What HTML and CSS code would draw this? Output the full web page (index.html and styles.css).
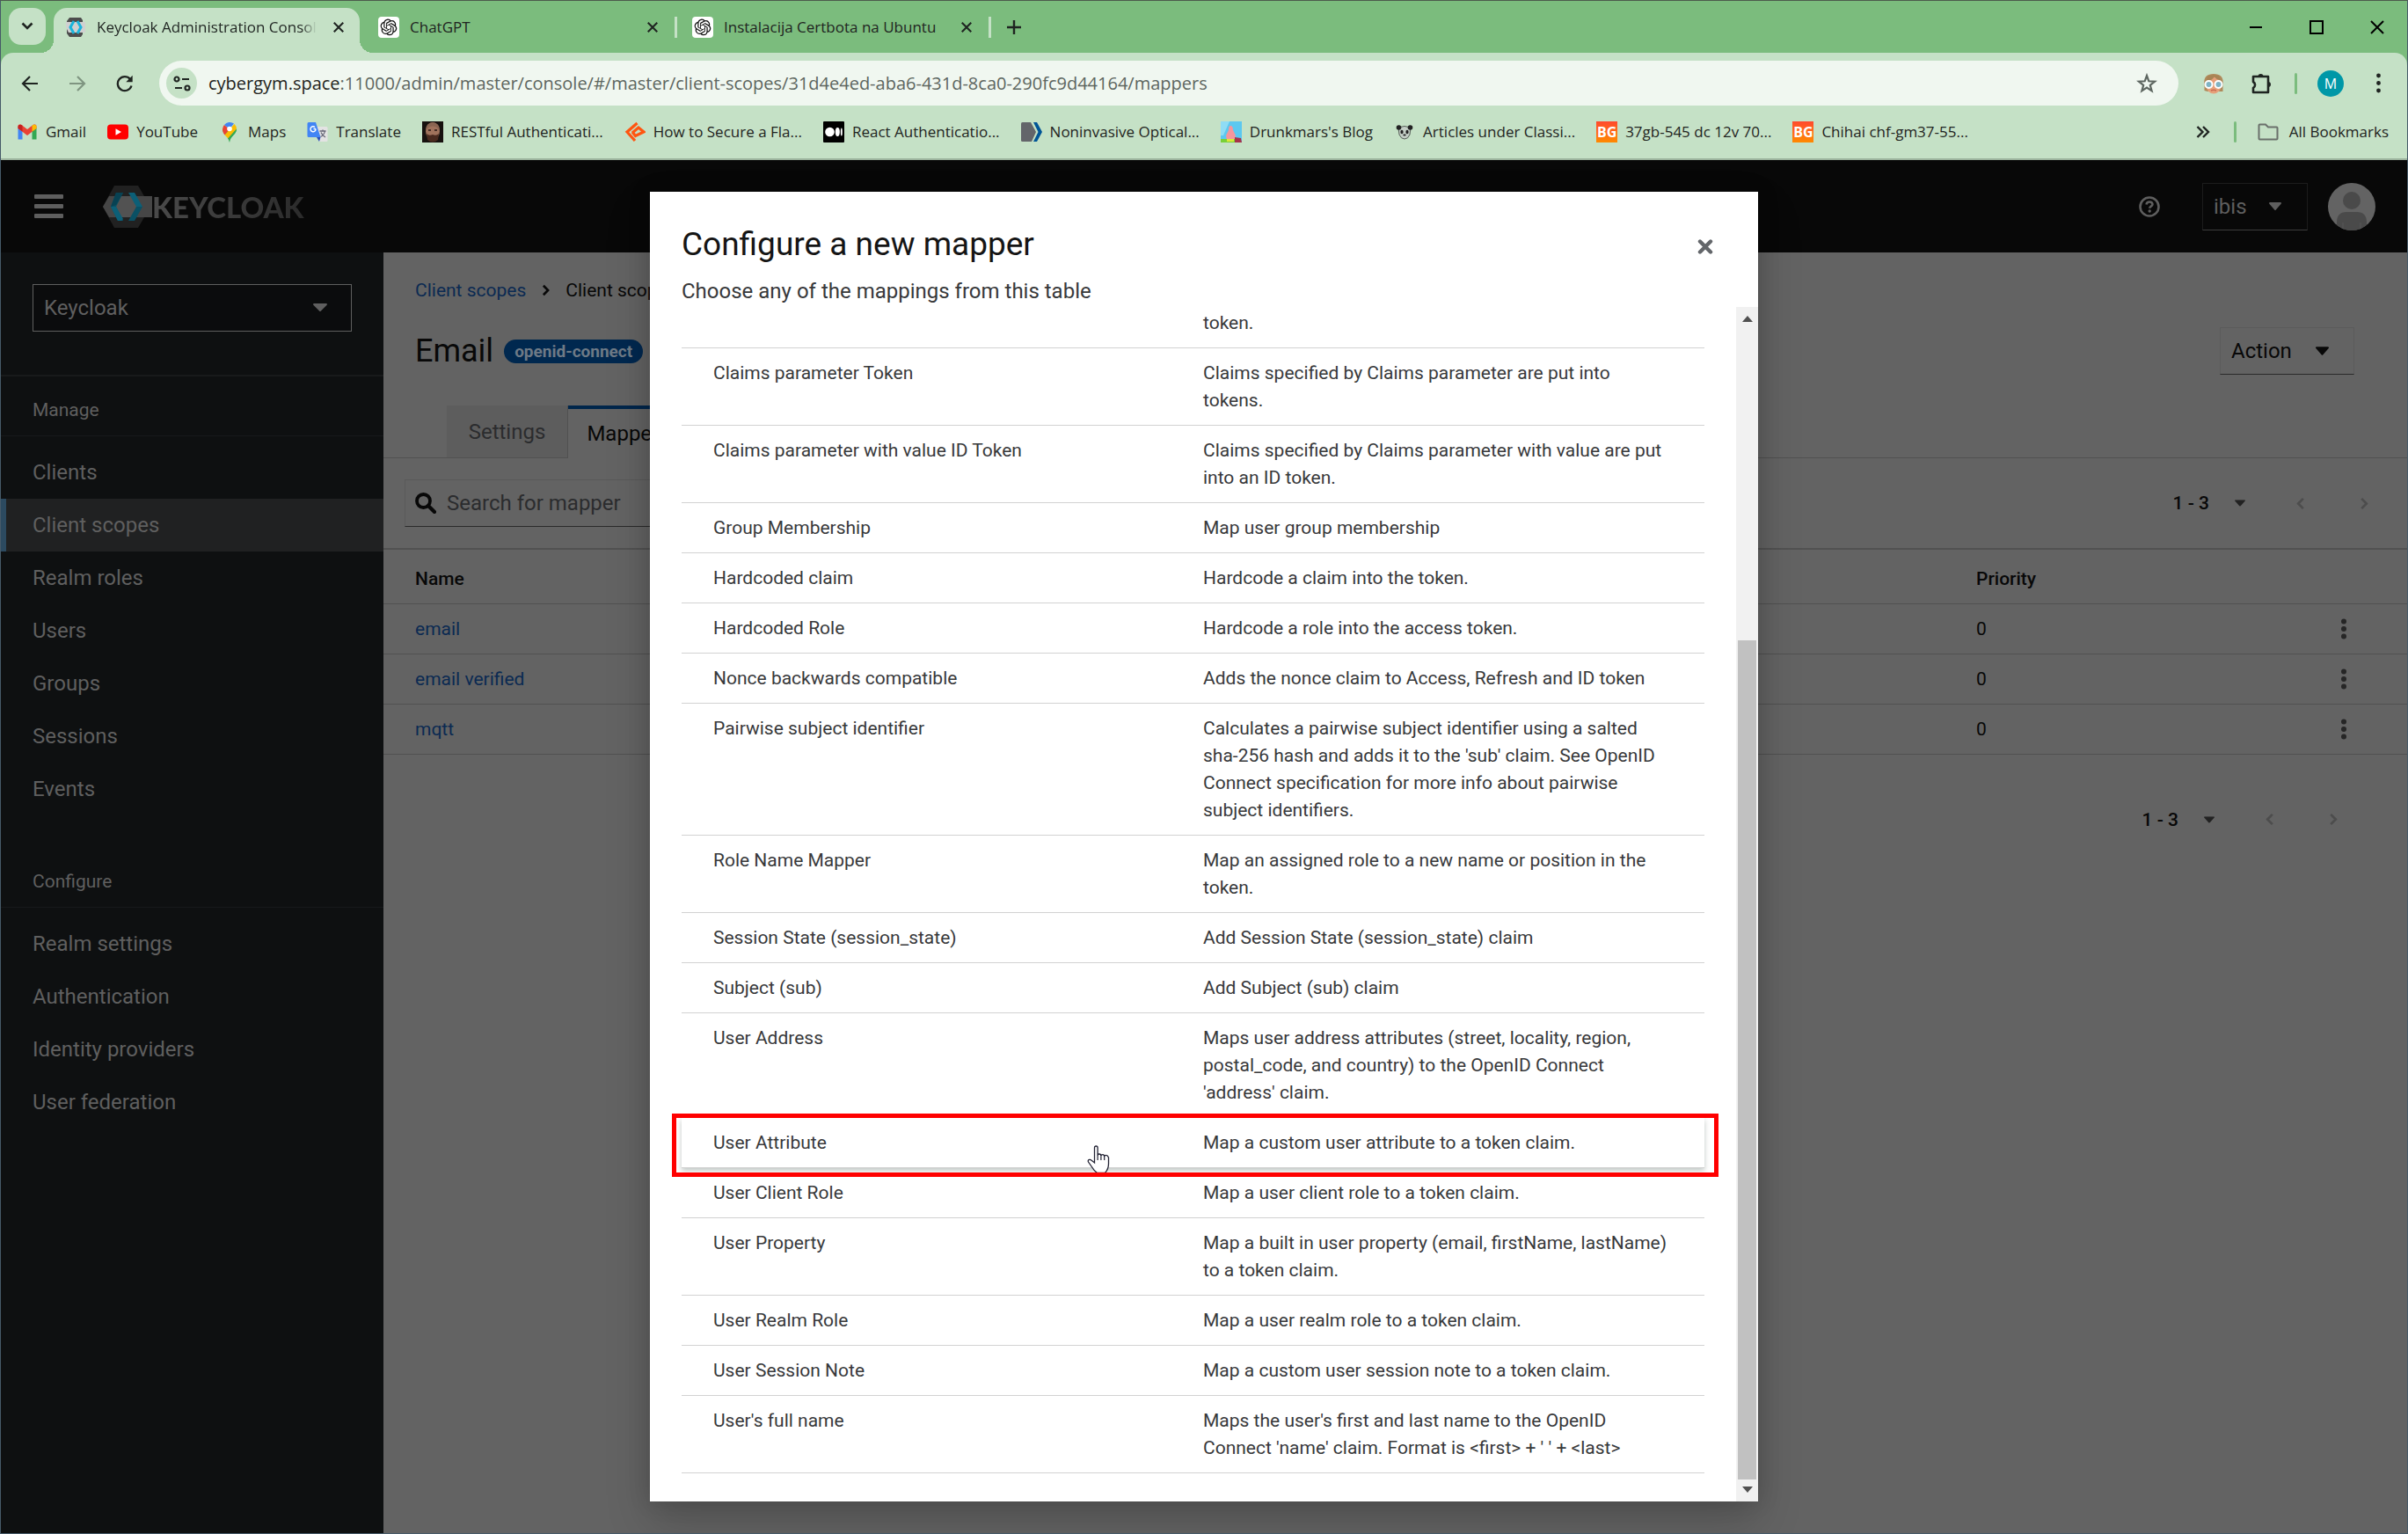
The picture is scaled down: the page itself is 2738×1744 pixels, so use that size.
FILE: index.html
```
<!DOCTYPE html>
<html lang="en">
<head>
<meta charset="utf-8">
<meta name="viewport" content="width=device-width, initial-scale=1">
<title>Keycloak Administration Console</title>
<link rel="stylesheet" href="styles.css">
</head>
<body>
<svg class="sprite" aria-hidden="true">
  <symbol id="i-x" viewBox="0 0 16 16"><path d="M2 2l12 12M14 2L2 14" fill="none" stroke="currentColor" stroke-width="2.4"/></symbol>
  <symbol id="i-openai" viewBox="0 0 24 24"><rect width="24" height="24" rx="4" fill="#fff"/><path transform="translate(2.600 2.600) scale(.78)" fill="#111" d="M22.2819 9.8211a5.9847 5.9847 0 0 0-.5157-4.9108 6.0462 6.0462 0 0 0-6.5098-2.9A6.0651 6.0651 0 0 0 4.9807 4.1818a5.9847 5.9847 0 0 0-3.9977 2.9 6.0462 6.0462 0 0 0 .7427 7.0966 5.98 5.98 0 0 0 .511 4.9107 6.051 6.051 0 0 0 6.5146 2.9001A5.9847 5.9847 0 0 0 13.2599 24a6.0557 6.0557 0 0 0 5.7718-4.2058 5.9894 5.9894 0 0 0 3.9977-2.9001 6.0557 6.0557 0 0 0-.7475-7.0729zm-9.022 12.6081a4.4755 4.4755 0 0 1-2.8764-1.0408l.1419-.0804 4.7783-2.7582a.7948.7948 0 0 0 .3927-.6813v-6.7369l2.02 1.1686a.071.071 0 0 1 .038.052v5.5826a4.504 4.504 0 0 1-4.4945 4.4944zm-9.6607-4.1254a4.4708 4.4708 0 0 1-.5346-3.0137l.142.0852 4.783 2.7582a.7712.7712 0 0 0 .7806 0l5.8428-3.3685v2.3324a.0804.0804 0 0 1-.0332.0615L9.74 19.9502a4.4992 4.4992 0 0 1-6.1408-1.6464zM2.3408 7.8956a4.485 4.485 0 0 1 2.3655-1.9728V11.6a.7664.7664 0 0 0 .3879.6765l5.8144 3.3543-2.0201 1.1685a.0757.0757 0 0 1-.071 0l-4.8303-2.7865A4.504 4.504 0 0 1 2.3408 7.872zm16.5963 3.8558L13.1038 8.364 15.1192 7.2a.0757.0757 0 0 1 .071 0l4.8303 2.7913a4.4944 4.4944 0 0 1-.6765 8.1042v-5.6772a.79.79 0 0 0-.407-.667zm2.0107-3.0231l-.142-.0852-4.7735-2.7818a.7759.7759 0 0 0-.7854 0L9.409 9.2297V6.8974a.0662.0662 0 0 1 .0284-.0615l4.8303-2.7866a4.4992 4.4992 0 0 1 6.6802 4.66zM8.3065 12.863l-2.02-1.1638a.0804.0804 0 0 1-.038-.0567V6.0742a4.4992 4.4992 0 0 1 7.3757-3.4537l-.142.0805L8.704 5.459a.7948.7948 0 0 0-.3927.6813zm1.0976-2.3654l2.602-1.4998 2.6069 1.4998v2.9994l-2.5974 1.4997-2.6067-1.4997Z"/></symbol>
  <symbol id="i-caret" viewBox="0 0 14 9"><path d="M1 0h12a1 1 0 0 1 .7 1.700L7.800 8.400a1 1 0 0 1-1.600 0L.3 1.700A1 1 0 0 1 1 0z" fill="currentColor"/></symbol>
  <symbol id="i-right" viewBox="0 0 10 16"><path d="M2 2l6 6-6 6" fill="none" stroke="currentColor" stroke-width="3"/></symbol>
  <symbol id="i-left" viewBox="0 0 10 16"><path d="M8 2L2 8l6 6" fill="none" stroke="currentColor" stroke-width="3"/></symbol>
  <symbol id="i-dots" viewBox="0 0 6 24"><circle cx="3" cy="3.500" r="3" fill="currentColor"/><circle cx="3" cy="12" r="3" fill="currentColor"/><circle cx="3" cy="20.500" r="3" fill="currentColor"/></symbol>
</svg>

<div class="window">
  <header class="chrome">
    <div class="tabstrip">
      <button class="tab-search" aria-label="Search tabs"><svg width="14" height="10" viewBox="0 0 14 10"><path d="M1.500 1.500L7 7l5.500-5.500" fill="none" stroke="currentColor" stroke-width="2.600"/></svg></button>
      <div class="tab tab-active">
        <svg class="favicon" viewBox="0 0 24 24"><path d="M5 1h13l2 3v16l-2 3H5l-3-4V5z" fill="#4d4d4d"/><path d="M1 6h22v12H4l-3-6z" fill="#d0d0d0"/><path d="M10 5L6 12l4 7M14 5l4 7-4 7" fill="none" stroke="#19b5dc" stroke-width="3"/></svg>
        <span class="tab-title tab-fade">Keycloak Administration Console</span>
        <button class="tab-close" aria-label="Close tab"><svg width="14" height="14"><use href="#i-x"/></svg></button>
      </div>
      <div class="tab">
        <svg class="favicon" viewBox="0 0 24 24"><use href="#i-openai"/></svg>
        <span class="tab-title">ChatGPT</span>
        <button class="tab-close" aria-label="Close tab"><svg width="14" height="14"><use href="#i-x"/></svg></button>
      </div>
      <div class="tab">
        <svg class="favicon" viewBox="0 0 24 24"><use href="#i-openai"/></svg>
        <span class="tab-title">Instalacija Certbota na Ubuntu</span>
        <button class="tab-close" aria-label="Close tab"><svg width="14" height="14"><use href="#i-x"/></svg></button>
      </div>
      <button class="tab-new" aria-label="New tab"><svg width="16" height="16" viewBox="0 0 16 16"><path d="M8 0v16M0 8h16" stroke="currentColor" stroke-width="2.400"/></svg></button>
      <div class="window-buttons">
        <button aria-label="Minimize"><svg width="16" height="16"><path d="M1 8h14" stroke="#000" stroke-width="2"/></svg></button>
        <button aria-label="Maximize"><svg width="16" height="16"><path d="M1 1h14v14H1z" fill="none" stroke="#000" stroke-width="2"/></svg></button>
        <button aria-label="Close"><svg width="16" height="16"><path d="M1 1l14 14M15 1L1 15" stroke="#000" stroke-width="2"/></svg></button>
      </div>
    </div>

    <div class="toolbar">
      <button class="tool" aria-label="Back"><svg width="20" height="20" viewBox="0 0 20 20"><path d="M19 10H3M10 2l-8 8 8 8" fill="none" stroke="currentColor" stroke-width="2.200"/></svg></button>
      <button class="tool tool-off" aria-label="Forward"><svg width="20" height="20" viewBox="0 0 20 20"><path d="M1 10h16M10 2l8 8-8 8" fill="none" stroke="currentColor" stroke-width="2.200"/></svg></button>
      <button class="tool" aria-label="Reload"><svg width="20" height="20" viewBox="0 0 20 20"><path d="M17.500 12.500A8 8 0 1 1 16 5" fill="none" stroke="currentColor" stroke-width="2.300"/><path d="M18.700.8v7.400h-7.400z" fill="currentColor"/></svg></button>
      <div class="omnibox">
        <button class="site-info" aria-label="View site information"><svg width="20" height="18" viewBox="0 0 20 18"><g fill="none" stroke="currentColor" stroke-width="2.200"><circle cx="4" cy="4" r="2.500"/><path d="M10 4h8M2 14h8"/><circle cx="16" cy="14" r="2.500"/></g></svg></button>
        <div class="url"><span class="url-host">cybergym.space</span>:11000/admin/master/console/#/master/client-scopes/31d4e4ed-aba6-431d-8ca0-290fc9d44164/mappers</div>
        <button class="star" aria-label="Bookmark this tab"><svg width="24" height="24" viewBox="0 0 24 24"><path d="M12 3l2.300 6.300 6.700.3-5.200 4.200 1.800 6.500L12 16.600l-5.600 3.700 1.800-6.500L3 9.600l6.700-.3z" fill="none" stroke="currentColor" stroke-width="2.200"/></svg></button>
      </div>
      <button class="tool" aria-label="Extension"><svg width="24" height="24" viewBox="0 0 24 24"><path d="M1.500 14C0 4 5 1 12 1s12 3 10.500 13v7h-4L5 21l-3.500-1z" fill="#b08a5b"/><ellipse cx="12" cy="14" rx="8.500" ry="9.500" fill="#e6a07a"/><path d="M4 8Q9 10 13 4q2 4 7 4l-2-5-7-1-6 2z" fill="#a88455"/><g fill="#7fb3c4" stroke="#fff" stroke-width="2"><circle cx="6.500" cy="13" r="4"/><circle cx="17.500" cy="13" r="4"/></g><path d="M9 20q3-1.500 6 0" fill="none" stroke="#c96b52" stroke-width="1.500"/></svg></button>
      <button class="tool" aria-label="Extensions"><svg width="26" height="26" viewBox="0 0 26 26"><path d="M4 5h17v18H4v-5a4 4 0 0 0 0-7z" fill="none" stroke="currentColor" stroke-width="2.600" stroke-linejoin="round"/><path d="M9.500 5a3 3 0 0 1 6 0zM21 11a3 3 0 0 1 0 6z" fill="currentColor"/></svg></button>
      <span class="divider"></span>
      <button class="tool" aria-label="Profile"><span class="profile">M</span></button>
      <button class="tool" aria-label="Menu"><svg width="5" height="29" viewBox="0 0 5 29"><g fill="currentColor"><circle cx="2.500" cy="6" r="2.400"/><circle cx="2.500" cy="14.500" r="2.400"/><circle cx="2.500" cy="23" r="2.400"/></g></svg></button>
    </div>

    <nav class="bookmarks" aria-label="Bookmarks">
      <a href="#"><svg viewBox="0 0 24 24"><path d="M1.500 20.500V7l5 4v9.500z" fill="#4285f4"/><path d="M17.500 20.500V11l5-4v13.500z" fill="#34a853"/><path d="M1.500 8V5.500C1.500 3.500 4 3 5.500 4L12 9l6.500-5c1.500-1 4-.5 4 1.500V8L12 16z" fill="#ea4335"/><path d="M17.500 11.500V4.800c2-1.800 5-1 5 1.200v2z" fill="#fbbc04"/><path d="M1.500 8V6c0-2.200 3-3 5-1.200v6.700z" fill="#c5221f"/></svg>Gmail</a>
      <a href="#"><svg viewBox="0 0 24 24"><rect y="3.500" width="24" height="17" rx="4" fill="#f00"/><path d="M9.500 8.200v7.600L16 12z" fill="#fff"/></svg>YouTube</a>
      <a href="#"><svg viewBox="0 0 24 24"><path d="M12 24c0-7-8-9-8-15.500L12 8l8 .5C20 15 12 17 12 24z" fill="#34a853"/><path d="M4 9a8 8 0 0 1 2-5l6 5-5.500 6.500C5 13.500 4 11.500 4 9z" fill="#ea4335"/><path d="M6 4a8 8 0 0 1 11-1.500L12 8.500z" fill="#4285f4"/><path d="M6.500 15.500L17.500 3A8 8 0 0 1 20 9l-9.500 10.500z" fill="#fbbc04"/><path d="M10 19.500L20 8.500C20 15 12 17 12 24c-.3-2-1-3.200-2-4.500z" fill="#34a853"/><circle cx="12" cy="8.500" r="2.800" fill="#fff"/></svg>Maps</a>
      <a href="#"><svg viewBox="0 0 24 24"><path d="M9 6h13a1.500 1.500 0 0 1 1.500 1.500v14A1.500 1.500 0 0 1 22 23h-8z" fill="#e3e3e3"/><path d="M2 1h8l5.500 17H2A1.500 1.500 0 0 1 .5 16.500v-14A1.500 1.500 0 0 1 2 1z" fill="#4285f4"/><path d="M11 18h4.500L14 23z" fill="#2b4fb8"/><path d="M10 8.500H7.500m2.500 0a3 3 0 1 1-1-2" fill="none" stroke="#fff" stroke-width="1.400"/><path d="M14.500 11h7M18 9.500V11m2.500 0c-.5 3-3 5.500-5 6.500m.5-5c1 2.500 3 4.500 5 5.500" fill="none" stroke="#667" stroke-width="1.300"/></svg>Translate</a>
      <a href="#"><svg viewBox="0 0 24 24"><path d="M0 0h24v24H0z" fill="#17110f"/><ellipse cx="12" cy="11" rx="8" ry="10" fill="#a0725c"/><path d="M4 10q0-8 8-9 8 1 8 9l-1 1q0-5-7-5.500Q5 6 5 11z" fill="#8a6552"/><path d="M5 14q3 3 7 1 4 2 7-1l-1 7q-6 5-12 0z" fill="#4a2a1f"/><path d="M7 10h3M14 10h3" stroke="#2a1814" stroke-width="1.500"/></svg>RESTful Authenticati...</a>
      <a href="#"><svg viewBox="0 0 24 24"><path d="M14.500 2L3 12l9 10M9 12l3.500 4.500L22 12l-6-5-7 6" fill="none" stroke="#ff5510" stroke-width="3.200"/></svg>How to Secure a Fla...</a>
      <a href="#"><svg viewBox="0 0 24 24"><rect width="24" height="24" rx="1"/><circle cx="7.500" cy="12" r="5.300" fill="#fff"/><ellipse cx="16.300" cy="12" rx="2.500" ry="5" fill="#fff"/><ellipse cx="20.800" cy="12" rx="1" ry="4.500" fill="#fff"/></svg>React Authenticatio...</a>
      <a href="#"><svg viewBox="0 0 24 24"><path d="M1.500 1H11l6 11-5 11H1.500Q0 23 0 21.500v-19Q0 1 1.500 1z" fill="#63656a"/><path d="M14 1h4l6 11-6 11h-4l5.500-11z" fill="#005596"/></svg>Noninvasive Optical...</a>
      <a href="#"><svg viewBox="0 0 24 24"><path d="M0 0h24v24H0z" fill="#5cc8f0"/><path d="M0 0h10L3 16H0z" fill="#8fdcf5"/><path d="M11 5q3 0 3 5l3 6-2 6H7l-1-6 3-6q0-5 2-5z" fill="#f5969c"/><path d="M0 20h16v4H0z" fill="#79d037"/><path d="M7 20h8v3H7z" fill="#dbe83a"/><path d="M16 18l7 1 1 5h-8z" fill="#a8324a"/></svg>Drunkmars's Blog</a>
      <a href="#"><svg viewBox="0 0 24 24"><path d="M5 7q7-3 14 0l-1 8q-2 5-6 5t-6-5z" fill="#c4cfc6" stroke="#555d57"/><circle cx="5.500" cy="7" r="2.800" fill="#222"/><circle cx="18.500" cy="7" r="2.800" fill="#222"/><ellipse cx="9" cy="12" rx="1.600" ry="2.200" fill="#222"/><ellipse cx="15" cy="12" rx="1.600" ry="2.200" fill="#222"/><ellipse cx="12" cy="15.500" rx="1.700" ry="1.100" fill="#222"/></svg>Articles under Classi...</a>
      <a href="#"><i class="bg-logo">BG</i>37gb-545 dc 12v 70...</a>
      <a href="#"><i class="bg-logo">BG</i>Chihai chf-gm37-55...</a>
      <span class="bookmarks-end">
        <button aria-label="More bookmarks"><svg width="16" height="14" viewBox="0 0 16 14"><path d="M1.500 1l6 6-6 6M8 1l6 6-6 6" fill="none" stroke="currentColor" stroke-width="2.400"/></svg></button>
        <span class="divider"></span>
        <a href="#"><svg viewBox="0 0 24 24"><path d="M2.500 3.500h6.500l3 3h9.500q1 0 1 1v12q0 1-1 1h-19q-1 0-1-1v-15q0-1 1-1z" fill="none" stroke="#6a706b" stroke-width="2"/></svg>All Bookmarks</a>
      </span>
    </nav>
  </header>

  <div class="app">
    <header class="masthead">
      <button class="burger" aria-label="Global navigation"><span></span><span></span><span></span></button>
      <a class="brand" href="#" aria-label="Keycloak">
        <svg width="56" height="48" viewBox="0 0 56 48"><path d="M13 0h27l14 24-14 24H13L0 24z" fill="#212121"/><path d="M7 12h49v24H7L0 24z" fill="#464646"/><path d="M21 12h14l7 12-7 12H21l-7-12z" fill="#525252"/><path d="M15 8h8l-8 16 8 16h-6L9 24z" fill="#0a5064"/><path d="M15 8h8l-8 14-6 2z" fill="#084253"/><path d="M9 24h6l8 14-2 2h-4z" fill="#0c5f77"/><path d="M29 8h7l9 16h-7z" fill="#0c5f77"/><path d="M38 24h7l-9 16h-7z" fill="#0a5064"/></svg>
        <span class="brand-name">KEYCLOAK</span>
      </a>
      <div class="masthead-tools">
        <button class="help" aria-label="Help"><svg width="24" height="24" viewBox="0 0 24 24"><circle cx="12" cy="12" r="10.500" fill="none" stroke="currentColor" stroke-width="2.600"/><path d="M8.500 9.500q.5-3 3.600-3t3.400 2.700c0 2.300-3.200 2.300-3.200 4.600" fill="none" stroke="currentColor" stroke-width="2.600"/><circle cx="12.200" cy="17" r="1.700" fill="currentColor"/></svg></button>
        <button class="user-menu">ibis<svg width="14" height="9"><use href="#i-caret"/></svg></button>
        <svg class="avatar" viewBox="0 0 54 54"><clipPath id="av"><circle cx="27" cy="27" r="27"/></clipPath><g clip-path="url(#av)"><path d="M0 0h54v54H0z" fill="#636363"/><ellipse cx="27" cy="20" rx="10" ry="10" fill="#4a4a4a"/><path d="M10 54V45q0-12 11-12h12q11 0 11 12v9z" fill="#4a4a4a"/><path d="M17 54V45M37 54V45" stroke="#555" stroke-width="1.500"/></g></svg>
      </div>
    </header>

    <aside class="sidebar">
      <div class="realm">
        <select aria-label="Realm"><option>Keycloak</option></select>
        <svg width="16" height="9" viewBox="0 0 14 9" preserveAspectRatio="none"><use href="#i-caret"/></svg>
      </div>
      <nav>
        <h2>Manage</h2>
        <ul>
          <li><a href="#">Clients</a></li>
          <li><a class="current" href="#" aria-current="page">Client scopes</a></li>
          <li><a href="#">Realm roles</a></li>
          <li><a href="#">Users</a></li>
          <li><a href="#">Groups</a></li>
          <li><a href="#">Sessions</a></li>
          <li><a href="#">Events</a></li>
        </ul>
        <h2 class="next">Configure</h2>
        <ul>
          <li><a href="#">Realm settings</a></li>
          <li><a href="#">Authentication</a></li>
          <li><a href="#">Identity providers</a></li>
          <li><a href="#">User federation</a></li>
        </ul>
      </nav>
    </aside>

    <main class="main">
      <nav class="breadcrumb" aria-label="Breadcrumb"><a href="#">Client scopes</a><svg width="9" height="14" viewBox="0 0 10 16"><use href="#i-right"/></svg><span>Client scope details</span></nav>
      <div class="title-row">
        <h1>Email</h1><span class="badge">openid-connect</span>
        <button class="action">Action<svg width="15" height="10"><use href="#i-caret"/></svg></button>
      </div>
      <div class="tabs"><button class="tab-item">Settings</button><button class="tab-item selected">Mappers</button><span class="tabs-rest"></span></div>
      <div class="list-tools">
        <label class="search"><svg width="24" height="24" viewBox="0 0 24 24"><circle cx="9.500" cy="9.500" r="7.500" fill="none" stroke="currentColor" stroke-width="3.800"/><path d="M15 15l7 7" stroke="currentColor" stroke-width="4.200" stroke-linecap="round"/></svg><input type="text" placeholder="Search for mapper" aria-label="Search for mapper"></label>
        <div class="pager"><b>1 - 3</b><svg class="pager-caret" width="12" height="8" viewBox="0 0 14 9"><use href="#i-caret"/></svg><button aria-label="Previous"><svg width="10" height="15" viewBox="0 0 10 16"><use href="#i-left"/></svg></button><button aria-label="Next"><svg width="10" height="15" viewBox="0 0 10 16"><use href="#i-right"/></svg></button></div>
      </div>
      <table class="scopes">
        <colgroup><col><col class="col-priority"><col class="col-menu"></colgroup>
        <thead><tr><th>Name</th><th>Priority</th><th></th></tr></thead>
        <tbody>
          <tr><td><a href="#">email</a></td><td>0</td><td><button aria-label="Actions"><svg width="6" height="24"><use href="#i-dots"/></svg></button></td></tr>
          <tr><td><a href="#">email verified</a></td><td>0</td><td><button aria-label="Actions"><svg width="6" height="24"><use href="#i-dots"/></svg></button></td></tr>
          <tr><td><a href="#">mqtt</a></td><td>0</td><td><button aria-label="Actions"><svg width="6" height="24"><use href="#i-dots"/></svg></button></td></tr>
        </tbody>
      </table>
      <div class="pager pager-bottom"><b>1 - 3</b><svg class="pager-caret" width="12" height="8" viewBox="0 0 14 9"><use href="#i-caret"/></svg><button aria-label="Previous"><svg width="10" height="15" viewBox="0 0 10 16"><use href="#i-left"/></svg></button><button aria-label="Next"><svg width="10" height="15" viewBox="0 0 10 16"><use href="#i-right"/></svg></button></div>
    </main>

    <div class="overlay">
      <section class="modal" role="dialog" aria-labelledby="modal-title">
        <header class="modal-head">
          <div><h2 id="modal-title">Configure a new mapper</h2><p>Choose any of the mappings from this table</p></div>
          <button aria-label="Close"><svg width="18" height="17" viewBox="0 0 18 17"><path d="M3 2.500l12 12M15 2.500l-12 12" stroke="currentColor" stroke-width="4.400" stroke-linecap="round"/></svg></button>
        </header>
        <div class="modal-body">
          <table class="mappers">
            <colgroup><col class="col-name"><col></colgroup>
            <tbody>
              <tr class="cut"><td></td><td>token.</td></tr>
              <tr><td>Claims parameter Token</td><td>Claims specified by Claims parameter are put into tokens.</td></tr>
              <tr><td>Claims parameter with value ID Token</td><td>Claims specified by Claims parameter with value are put into an ID token.</td></tr>
              <tr><td>Group Membership</td><td>Map user group membership</td></tr>
              <tr><td>Hardcoded claim</td><td>Hardcode a claim into the token.</td></tr>
              <tr><td>Hardcoded Role</td><td>Hardcode a role into the access token.</td></tr>
              <tr><td>Nonce backwards compatible</td><td>Adds the nonce claim to Access, Refresh and ID token</td></tr>
              <tr><td>Pairwise subject identifier</td><td>Calculates a pairwise subject identifier using a salted sha-256 hash and adds it to the 'sub' claim. See OpenID Connect specification for more info about pairwise subject identifiers.</td></tr>
              <tr><td>Role Name Mapper</td><td>Map an assigned role to a new name or position in the token.</td></tr>
              <tr><td>Session State (session_state)</td><td>Add Session State (session_state) claim</td></tr>
              <tr><td>Subject (sub)</td><td>Add Subject (sub) claim</td></tr>
              <tr><td>User Address</td><td>Maps user address attributes (street, locality, region, postal_code, and country) to the OpenID Connect 'address' claim.</td></tr>
              <tr class="hovered"><td>User Attribute<svg class="hand" width="26" height="32" viewBox="0 0 26 32"><path d="M8.500 20V3q0-2 1.800-2t1.800 2v9q0-2 1.900-2t1.900 2.500q0-1.800 1.900-1.800t1.900 2.300q0-1.600 1.900-1.600T24.500 14v7q0 6-4 10.500h-9Q8 29 5 24L1.500 19q-.8-2 1-2.600 1.500-.4 3 1.200z" fill="#fff" stroke="#223" stroke-width="1.300"/><path d="M12.100 12v5M15.900 12.500V17M19.700 13v4" stroke="#223" stroke-width="1.200"/></svg></td><td>Map a custom user attribute to a token claim.</td></tr>
              <tr><td>User Client Role</td><td>Map a user client role to a token claim.</td></tr>
              <tr><td>User Property</td><td>Map a built in user property (email, firstName, lastName) to a token claim.</td></tr>
              <tr><td>User Realm Role</td><td>Map a user realm role to a token claim.</td></tr>
              <tr><td>User Session Note</td><td>Map a custom user session note to a token claim.</td></tr>
              <tr><td>User's full name</td><td>Maps the user's first and last name to the OpenID Connect 'name' claim. Format is &lt;first&gt; + ' ' + &lt;last&gt;</td></tr>
            </tbody>
          </table>
          <div class="scrollbar" aria-hidden="true">
            <svg width="12" height="7"><path d="M6 0l6 7H0z" fill="#505050"/></svg>
            <div class="track"><div class="thumb"></div></div>
            <svg width="12" height="7"><path d="M0 0h12L6 7z" fill="#505050"/></svg>
          </div>
        </div>
      </section>
    </div>
  </div>
</div>
</body>
</html>
```
FILE: styles.css
```
*, *::before, *::after { box-sizing: border-box; }
body, h1, h2, p, ul { margin: 0; padding: 0; }
ul { list-style: none; }
body {
  --strip: #7bbc7d;
  --bar: #c5e1c6;
  --ink: #1f2421;
  font-family: Roboto, sans-serif;
  font-size: 21px;
}
a { color: inherit; text-decoration: none; }
button { display: flex; align-items: center; justify-content: center; margin: 0; padding: 0; border: 0; background: none; color: inherit; font: inherit; }
svg { display: block; flex: none; }
.sprite { position: absolute; width: 0; height: 0; }

.window { display: flex; flex-direction: column; height: 100vh; border: 1px solid #465a68; border-top-color: #4c5c4c; overflow: hidden; }

/* Browser frame */
.chrome { flex: none; background: var(--strip); color: var(--ink); font-family: "Open Sans", sans-serif; font-size: 17px; }
.tabstrip { display: flex; height: 59px; padding-left: 9px; }
.tab-search { width: 42px; height: 42px; margin: 8px 9px 0 0; border-radius: 14px; background: var(--bar); }
.tab { position: relative; display: flex; align-items: center; width: 357px; padding: 0 16px 0 17px; }
.tab::after { content: ""; position: absolute; right: 0; top: 18px; width: 3px; height: 24px; background: var(--bar); }
.tab-active { width: 348px; margin: 8px 4px 0 0; padding: 0 12px 8px 13px; border-radius: 15px 15px 0 0; background: var(--bar); }
.tab-active::before, .tab-active::after { content: ""; position: absolute; top: auto; bottom: 0; width: 15px; height: 15px; background: radial-gradient(circle at 0 0, transparent 15px, var(--bar) 15px); }
.tab-active::before { left: -15px; }
.tab-active::after { right: -15px; background: radial-gradient(circle at 100% 0, transparent 15px, var(--bar) 15px); }
.favicon { width: 24px; height: 24px; margin-right: 12px; }
.tab-title { flex: 1; overflow: hidden; white-space: nowrap; }
.tab-fade { -webkit-mask: linear-gradient(90deg, #000 93%, transparent); mask: linear-gradient(90deg, #000 93%, transparent); }
.tab-close { width: 24px; height: 24px; margin-left: 13px; }
.tab-new { width: 52px; }
.window-buttons { display: flex; margin-left: auto; }
.window-buttons button { width: 69px; }

.toolbar { display: flex; align-items: center; height: 69px; padding: 0 6px; border-radius: 14px 14px 0 0; background: var(--bar); }
.tool { width: 54px; height: 42px; }
.tool-off { color: #7f9581; }
.omnibox { display: flex; align-items: center; flex: 1; height: 51px; margin: 0 13px 0 12px; padding: 0 24px 0 8px; border-radius: 26px; background: #f0f7f0; color: #5d6660; font-size: 20px; }
.site-info { width: 35px; height: 35px; border-radius: 50%; background: var(--bar); color: var(--ink); }
.url { flex: 1; margin-left: 13px; overflow: hidden; white-space: nowrap; }
.url-host { color: var(--ink); }
.divider { width: 3px; height: 24px; margin: 0 11px; border-radius: 2px; background: var(--strip); }
.profile { width: 30px; height: 30px; border-radius: 50%; background: #0097a7; color: #fff; font-size: 16px; line-height: 30px; text-align: center; }

.bookmarks { display: flex; align-items: center; height: 53px; padding: 0 21px 10px 18px; border-bottom: 2px solid #9cb39d; background: var(--bar); }
.bookmarks a { display: flex; align-items: center; gap: 9px; margin-right: 24px; white-space: nowrap; }
.bookmarks a svg { width: 24px; height: 24px; }
.bg-logo { width: 24px; height: 24px; background: linear-gradient(#ff4a2e, #ff8a00); color: #fff; font: bold 16px/24px "Open Sans", sans-serif; text-align: center; }
.bookmarks-end { display: flex; align-items: center; margin-left: auto; }
.bookmarks-end button { width: 48px; }
.bookmarks-end .divider { margin-right: 24px; }
.bookmarks .bookmarks-end a { gap: 12px; margin: 0; }

/* Console */
.app { position: relative; flex: 1; min-height: 0; display: grid; grid-template: 105px 1fr / 435px 1fr; background: #080808; color: #080808; }
.masthead { grid-column: 1 / -1; display: flex; align-items: center; padding: 0 36px; color: #5e5e5e; }
.burger { flex-direction: column; gap: 6px; width: 36px; }
.burger span { width: 33px; height: 5px; border-radius: 1px; background: #5e5e5e; }
.brand { display: flex; align-items: center; margin-left: 44px; }
.brand-name { background: linear-gradient(90deg, #4a4a4a, #2b2b2b); -webkit-background-clip: text; background-clip: text; color: transparent; font: 900 33px/40px Lato, sans-serif; }
.masthead-tools { display: flex; align-items: center; margin-left: auto; font-size: 24px; }
.user-menu { justify-content: space-between; width: 120px; height: 54px; margin: 0 23px 0 48px; padding: 0 29px 0 12px; border: 1px solid #1c1c1c; border-bottom-color: #3c3c3c; }
.avatar { width: 54px; height: 54px; }

.sidebar { background: #0e1011; color: #5f5f5f; font-size: 24px; }
.realm { position: relative; padding: 36px 36px 49px; border-bottom: 2px solid #181a1b; }
.realm select { width: 100%; height: 54px; padding: 0 12px; appearance: none; border: 1px solid #5f5f5f; border-radius: 0; background: #0b0c0d; color: inherit; font: inherit; opacity: 1; }
.realm svg { position: absolute; right: 64px; top: 58px; }
.sidebar h2 { height: 68px; padding: 24px 36px 0; border-bottom: 1px solid #17191b; font-size: 21px; font-weight: 400; line-height: 28px; }
.sidebar h2.next { margin-top: 37px; }
.sidebar ul { padding-top: 11px; }
.sidebar li a { display: block; padding: 0 36px; line-height: 60px; }
.sidebar .current { background: #202122; box-shadow: inset 6px 0 #2c4a60; }

.main { background: #636363; }
.breadcrumb { display: flex; align-items: center; gap: 18px; padding: 31px 36px 30px; line-height: 24px; }
.main a { color: #0b2a52; }
.title-row { display: flex; align-items: center; height: 54px; padding: 0 60px 0 36px; }
.title-row h1 { font-size: 36px; font-weight: 400; }
.badge { margin-left: 12px; padding: 0 12px; border-radius: 14px; background: #00284f; color: #6e7a86; font-size: 19px; font-weight: 700; line-height: 27px; }
.action { justify-content: space-between; width: 153px; height: 54px; margin-left: auto; padding: 0 28px 0 12px; border: 1px solid #5b5b5b; border-bottom-color: #2a2a2a; font-size: 24px; }
.tabs { display: flex; height: 60px; margin-top: 35px; font-size: 24px; }
.tabs::before { content: ""; width: 72px; border-bottom: 1px solid #515151; }
.tab-item { width: 138px; border-right: 1px solid #515151; border-bottom: 1px solid #515151; background: #5d5d5d; color: #2b2c2e; }
.tab-item.selected { border-bottom: 0; border-top: 4px solid #00264b; background: none; color: #080808; }
.tabs-rest { flex: 1; border-bottom: 1px solid #515151; }
.list-tools { display: flex; align-items: center; justify-content: space-between; height: 102px; padding: 0 25px 0 24px; }
.search { display: flex; align-items: center; gap: 12px; width: 340px; height: 54px; padding-left: 11px; border: 1px solid #5a5a5a; border-bottom-color: #2a2a2a; }
.search input { flex: 1; min-width: 0; padding: 0; border: 0; background: none; font: 24px Roboto, sans-serif; }
.search input::placeholder { color: #2b2c2e; opacity: 1; }
.pager { display: flex; align-items: center; color: #4d4d4d; }
.pager b { color: #080808; font-weight: 500; }
.pager-caret { margin: 0 39px 0 29px; color: #222; }
.pager button { width: 48px; height: 36px; }
.pager button + button { margin-left: 24px; }
.pager-bottom { justify-content: flex-end; height: 148px; padding-right: 60px; }

.scopes { width: 100%; border-collapse: collapse; border-top: 2px solid #515151; table-layout: fixed; }
.col-priority { width: 280px; }
.col-menu { width: 210px; }
.scopes th, .scopes td { height: 57px; padding: 0; border-bottom: 1px solid #515151; text-align: left; }
.scopes th { height: 62px; padding-top: 6px; font-weight: 500; }
.scopes th:first-child, .scopes td:first-child { padding-left: 36px; }
.scopes button { width: 48px; margin-left: 114px; color: #262626; }

/* Mapper picker */
.overlay { position: absolute; inset: 0; display: flex; align-items: center; justify-content: center; overflow: hidden; }
.modal { display: flex; flex-direction: column; width: 1260px; max-width: 100%; height: calc(100% - 72px); background: #fff; color: #38393b; box-shadow: 0 24px 48px rgba(0, 0, 0, .18), 0 0 24px rgba(0, 0, 0, .14); }
.modal-head { display: flex; justify-content: space-between; padding: 36px 48px 0 36px; }
.modal-head h2 { color: #151515; font-size: 37px; font-weight: 400; line-height: 47px; }
.modal-head p { font-size: 24px; line-height: 32px; padding-top: 14px; }
.modal-head button { width: 24px; height: 52px; color: #63666a; }
.modal-body { display: flex; justify-content: space-between; align-items: flex-start; flex: 1; min-height: 0; padding: 2px 0 0 36px; overflow: hidden; }
.mappers { width: 1163px; border-collapse: collapse; table-layout: fixed; }
.col-name { width: 557px; }
.mappers td { padding: 13px 36px 12px; border-bottom: 1px solid #d2d2d2; line-height: 31px; vertical-align: top; }
.mappers .cut td { padding-top: 3px; }
.mappers tr { position: relative; }
.mappers .hovered { box-shadow: 0 3px 6px rgba(3, 30, 20, .25); }
.mappers .hovered td:first-child::after { content: ""; position: absolute; inset: -5px -16px -10px -11px; border: 5px solid #f00; }
.hand { position: absolute; left: 461px; top: 31px; }
.scrollbar { display: flex; flex-direction: column; align-items: center; align-self: stretch; width: 25px; padding: 10px 0 10px; background: #f1f1f1; }
.track { display: flex; flex-direction: column; justify-content: flex-end; flex: 1; margin: 9px 0 8px; }
.thumb { width: 21px; height: 73%; background: #c1c1c1; }
```
